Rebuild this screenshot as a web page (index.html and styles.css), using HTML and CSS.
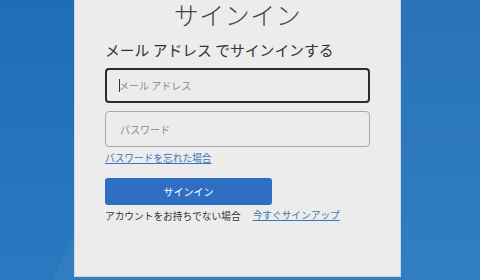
FILE: index.html
```html
<!DOCTYPE html>
<html lang="ja">
<head>
<meta charset="utf-8">
<link rel="stylesheet" href="styles.css">
</head>
<body>
<div class="bg">
  <div class="card">
    <h1 class="title">サインイン</h1>
    <p class="subtitle">メール アドレス でサインインする</p>
    <div class="field field-focus"><span class="caret"></span><span class="ph">メール アドレス</span></div>
    <div class="field"><span class="ph">パスワード</span></div>
    <a class="link forgot" href="#">パスワードを忘れた場合</a>
    <button class="btn">サインイン</button>
    <div class="signup"><span>アカウントをお持ちでない場合</span><a class="link" href="#">今すぐサインアップ</a></div>
  </div>
</div>
</body>
</html>
```
FILE: styles.css
```css
html, body {
  margin: 0;
  padding: 0;
  width: 480px;
  height: 280px;
  overflow: hidden;
}
body {
  font-family: "Noto Sans CJK JP", "Noto Sans", sans-serif;
}
.bg {
  width: 480px;
  height: 280px;
  background:
    linear-gradient(115deg, rgba(0,0,0,0) 0 30%, rgba(255,255,255,0.04) 30% 100%),
    linear-gradient(180deg, #1f6db6 0%, #2574bd 60%, #2a79c0 100%);
  display: flex;
  justify-content: flex-start;
  padding-left: 74px;
  box-sizing: border-box;
}
.card {
  width: 327px;
  height: 277px;
  box-sizing: border-box;
  background: #ececec;
  border-left: 1px solid #d6d6d6;
  border-right: 1px solid #d6d6d6;
  border-bottom: 1px solid #d6d6d6;
  padding: 0 30px;
  display: flex;
  flex-direction: column;
  align-items: flex-start;
}
.title {
  align-self: center;
  margin: 0;
  font-size: 25px;
  font-weight: 300;
  color: #444;
  line-height: 28px;
  letter-spacing: 0.5px;
}
.subtitle {
  margin: 12px 0 0 0;
  font-size: 14.8px;
  line-height: 20px;
  color: #333;
}
.field {
  box-sizing: border-box;
  width: 265px;
  height: 36px;
  border: 1px solid #a9a9a9;
  border-radius: 4px;
  margin-top: 9px;
  display: flex;
  align-items: center;
  padding-left: 14px;
  background: #ececec;
}
.field-focus {
  border: 2px solid #2b2b2b;
  height: 35px;
  margin-top: 8px;
  padding-left: 12px;
}
.field + .field {
  margin-top: 8px;
  height: 36px;
}
.caret {
  width: 1px;
  height: 13px;
  background: #333;
  margin-right: -1px;
}
.ph {
  font-size: 10px;
  color: #8a8a8a;
}
.link {
  font-size: 9.7px;
  color: #3a77b8;
  text-decoration: underline;
  line-height: 14px;
}
.forgot {
  margin-top: 4px;
}
.btn {
  margin-top: 13px;
  width: 167px;
  height: 27px;
  border: none;
  border-radius: 3px;
  background: #2e6fc3;
  color: #fff;
  font-family: inherit;
  font-size: 10px;
  padding: 0;
}
.signup {
  margin-top: 3px;
  display: flex;
  gap: 12px;
  font-size: 9.7px;
  line-height: 16px;
  color: #333;
}
```
